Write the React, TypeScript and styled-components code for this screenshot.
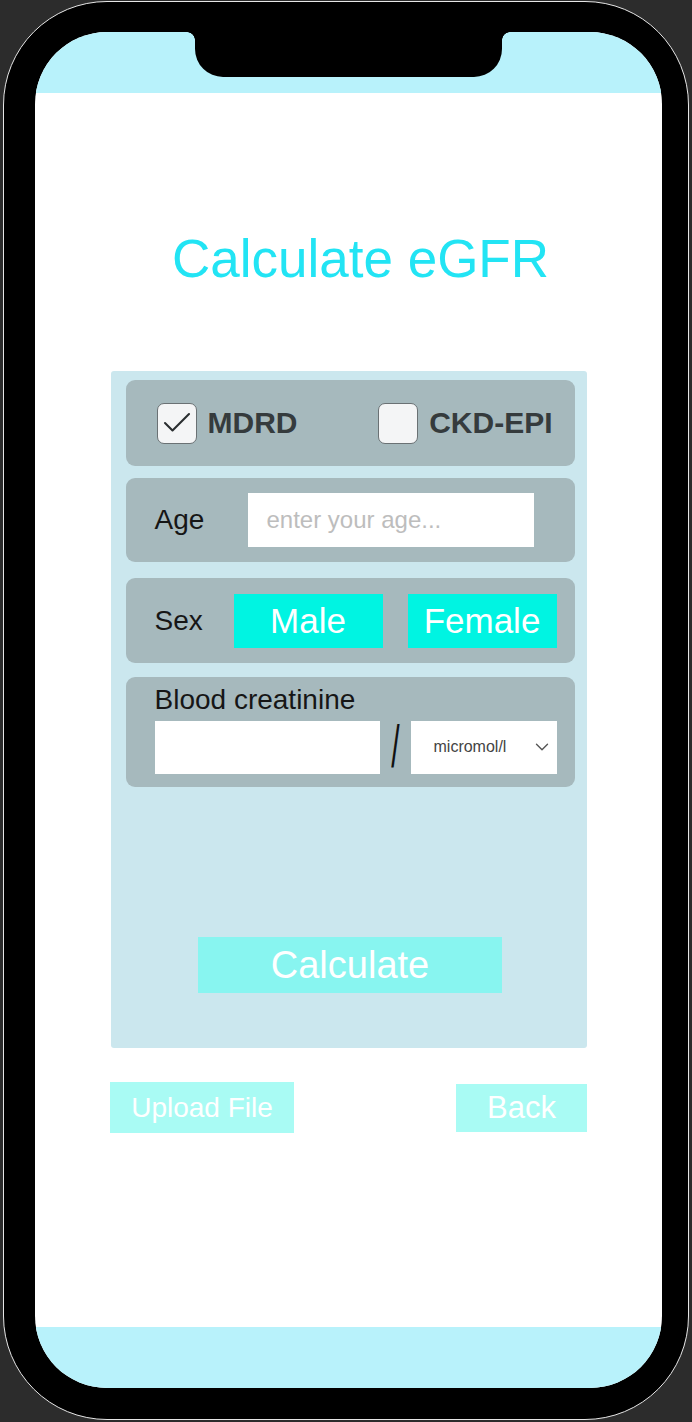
import styled, { createGlobalStyle } from 'styled-components';
import { Check, ChevronDown } from 'lucide-react';

const GlobalStyle = createGlobalStyle`
	html, body {
		margin: 0;
		padding: 0;
		background: #2c2c2c;
	}
	body {
		font-family: 'Liberation Sans', Arial, sans-serif;
	}
	* {
		box-sizing: border-box;
	}
`;

const Phone = styled.div`
	width: 686px;
	height: 1419px;
	margin: 1px 0 0 3px;
	padding: 30px 26px 30px 31px;
	background: #000;
	border: 1px solid #e6e6e6;
	border-radius: 104px;
`;

const Screen = styled.div`
	position: relative;
	width: 627px;
	height: 1356px;
	border-radius: 72px;
	overflow: hidden;
	background: #fff;
	display: flex;
	flex-direction: column;
`;

const Notch = styled.div`
	position: absolute;
	top: 0;
	left: 160px;
	width: 307px;
	height: 45px;
	background: #000;
	border-radius: 0 0 28px 28px;
	&::before,
	&::after {
		content: '';
		position: absolute;
		top: 0;
		width: 8px;
		height: 8px;
	}
	&::before {
		left: -8px;
		background: radial-gradient(circle at 0 100%, transparent 7.5px, #000 8px);
	}
	&::after {
		right: -8px;
		background: radial-gradient(circle at 100% 100%, transparent 7.5px, #000 8px);
	}
`;

const Band = styled.div`
	height: 61px;
	flex-shrink: 0;
	background: #b8f2fb;
`;

const Content = styled.main`
	flex: 1;
	display: flex;
	flex-direction: column;
	align-items: center;
`;

const Title = styled.h1`
	margin: 139px 0 0;
	padding-left: 24px;
	font-size: 53px;
	font-weight: 400;
	line-height: 1;
	color: #22e4f4;
`;

const Panel = styled.section`
	margin-top: 86px;
	width: 476px;
	height: 677px;
	padding: 9px 12px 0 15px;
	background: #cbe7ee;
	border-radius: 3px;
	display: flex;
	flex-direction: column;
`;

const Card = styled.div<{ $h: number; $mt?: number; $stack?: boolean }>`
	height: ${(p) => p.$h}px;
	margin-top: ${(p) => p.$mt ?? 0}px;
	background: #a6b9bd;
	border-radius: 9px;
	display: flex;
	flex-direction: ${(p) => (p.$stack ? 'column' : 'row')};
	align-items: ${(p) => (p.$stack ? 'flex-start' : 'center')};
	padding: ${(p) => (p.$stack ? '9px 0 0 29px' : '0 0 0 29px')};
`;

const MethodCard = styled(Card)`
	justify-content: space-between;
	padding: 0 22px 0 31px;
`;

const Method = styled.label`
	display: flex;
	align-items: center;
	gap: 11px;
	font-size: 30px;
	font-weight: 700;
	color: #353b3d;
`;

const Box = styled.span`
	width: 40px;
	height: 41px;
	display: flex;
	align-items: center;
	justify-content: center;
	background: #f4f5f6;
	border: 1.5px solid #6a7174;
	border-radius: 7px;
	color: #2a2e30;
`;

const Label = styled.span<{ $w?: number }>`
	width: ${(p) => (p.$w ? `${p.$w}px` : 'auto')};
	font-size: 28px;
	line-height: 1;
	color: #161616;
`;

const TextField = styled.input<{ $w: number; $h?: number }>`
	width: ${(p) => p.$w}px;
	height: ${(p) => p.$h ?? 54}px;
	padding: 0 0 0 19px;
	border: none;
	outline: none;
	background: #fff;
	font-family: inherit;
	font-size: 24px;
	color: #333;
	&::placeholder {
		color: #bdbdbd;
	}
`;

const SexButton = styled.button`
	width: 149px;
	height: 54px;
	border: none;
	background: #00f4e2;
	color: #fff;
	font-family: inherit;
	font-size: 35px;
	padding: 0;
	& + & {
		margin-left: 25px;
	}
`;

const MeasureLine = styled.div`
	display: flex;
	align-items: center;
	margin-top: 3px;
`;

const Slash = styled.span`
	width: 31px;
	text-align: center;
	font-size: 60px;
	line-height: 1;
	color: #111;
	transform: scaleX(0.5);
`;

const UnitSelect = styled.div`
	width: 146px;
	height: 53px;
	display: flex;
	align-items: center;
	justify-content: space-between;
	padding: 0 4px 0 23px;
	background: #fff;
	font-size: 16px;
	color: #444;
`;

const CalcButton = styled.button`
	align-self: center;
	margin-top: 150px;
	width: 304px;
	height: 56px;
	border: none;
	padding: 0;
	background: #88f5f0;
	color: #fff;
	font-family: inherit;
	font-size: 38px;
`;

const Actions = styled.div`
	margin-top: 34px;
	width: 477px;
	display: flex;
	justify-content: space-between;
	align-items: center;
`;

const SoftButton = styled.button<{ $w: number; $h: number; $size: number }>`
	width: ${(p) => p.$w}px;
	height: ${(p) => p.$h}px;
	border: none;
	padding: 0;
	background: #a9fbf4;
	color: #fff;
	font-family: inherit;
	font-size: ${(p) => p.$size}px;
`;

const CheckOption = ({ label, checked }: { label: string; checked: boolean }) => (
	<Method>
		<Box>{checked && <Check size={36} strokeWidth={1.4} />}</Box>
		{label}
	</Method>
);

const App = () => {
	return (
		<>
			<GlobalStyle />
			<Phone>
				<Screen>
					<Notch />
					<Band />
					<Content>
						<Title>Calculate eGFR</Title>
						<Panel>
							<MethodCard $h={86}>
								<CheckOption label='MDRD' checked />
								<CheckOption label='CKD-EPI' checked={false} />
							</MethodCard>
							<Card $h={84} $mt={12}>
								<Label $w={93}>Age</Label>
								<TextField $w={286} placeholder='enter your age...' />
							</Card>
							<Card $h={85} $mt={16}>
								<Label $w={79}>Sex</Label>
								<SexButton>Male</SexButton>
								<SexButton>Female</SexButton>
							</Card>
							<Card $h={110} $mt={14} $stack>
								<Label>Blood creatinine</Label>
								<MeasureLine>
									<TextField $w={225} $h={53} />
									<Slash>/</Slash>
									<UnitSelect>
										micromol/l
										<ChevronDown size={22} strokeWidth={1.5} color='#555' />
									</UnitSelect>
								</MeasureLine>
							</Card>
							<CalcButton>Calculate</CalcButton>
						</Panel>
						<Actions>
							<SoftButton $w={184} $h={51} $size={28}>
								Upload File
							</SoftButton>
							<SoftButton $w={131} $h={48} $size={31}>
								Back
							</SoftButton>
						</Actions>
					</Content>
					<Band />
				</Screen>
			</Phone>
		</>
	);
};

export default App;
